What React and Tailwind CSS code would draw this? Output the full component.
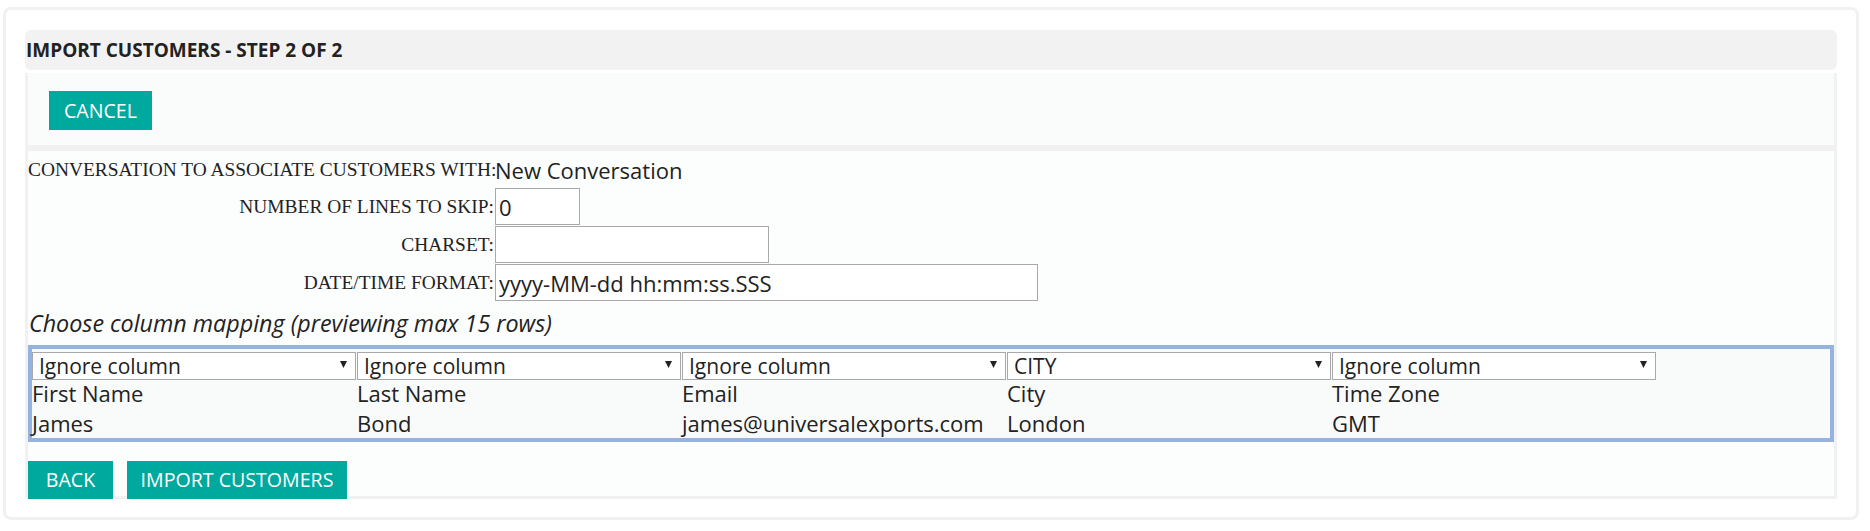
const COLUMNS = [
  { mapping: 'Ignore column', header: 'First Name', value: 'James' },
  { mapping: 'Ignore column', header: 'Last Name', value: 'Bond' },
  { mapping: 'Ignore column', header: 'Email', value: 'james@universalexports.com' },
  { mapping: 'CITY', header: 'City', value: 'London' },
  { mapping: 'Ignore column', header: 'Time Zone', value: 'GMT' },
]

function MappingSelect({ value }) {
  return (
    <div className="relative w-[324px] h-[28px]">
      <select
        defaultValue={value}
        className="appearance-none w-full h-full bg-white border border-[#a9a9a9] pl-[6px] pr-[20px] text-[21px] leading-[26px] text-[#222] outline-none"
      >
        <option>{value}</option>
      </select>
      <svg
        className="absolute right-[9px] top-[11px] pointer-events-none"
        width="7"
        height="7"
        viewBox="0 0 7 7"
      >
        <path d="M0 0h7L3.5 7z" fill="#222" />
      </svg>
    </div>
  )
}

function FieldRow({ label, children, className = '' }) {
  return (
    <div className={`flex items-center h-[37px] ${className}`}>
      <div className="w-[466px] text-right font-['Liberation_Serif',serif] text-[19.4px] text-[#222] leading-none whitespace-nowrap">
        {label}
      </div>
      <div className="ml-[1px] flex items-center">{children}</div>
    </div>
  )
}

function TealButton({ children, className = '' }) {
  return (
    <button className={`h-[38px] bg-[#00a99d] text-white text-[19.6px] leading-none uppercase ${className}`}>
      {children}
    </button>
  )
}

export default function App() {
  return (
    <div className="min-h-[531px] bg-white pl-[3px] pt-[7px] font-['Open_Sans',sans-serif] text-[#222]">
      <div className="w-[1856px] border-[3px] border-[#f1f1f1] rounded-[8px] px-[19px] pt-[20px] pb-[18px] bg-white">
        {/* Header */}
        <div className="h-[40px] bg-[#f2f2f2] rounded-[6px] flex items-center pl-[1px] text-[19px] font-bold text-[#222]">
          IMPORT CUSTOMERS - STEP 2 OF 2
        </div>

        <div className="mt-[3px] border-x-[3px] border-b-[3px] border-[#f1f1f1] bg-[#fcfdfd]">
          {/* Cancel bar */}
          <div className="h-[72px] bg-[#fafcfb] pl-[21px] pt-[18px]">
            <TealButton className="w-[103px] h-[39px]">Cancel</TealButton>
          </div>
          <div className="h-[6px] bg-[#f1f1f1]" />

          {/* Form */}
          <div className="h-[345px] flex flex-col">
            <FieldRow label="CONVERSATION TO ASSOCIATE CUSTOMERS WITH:">
              <span className="text-[22px] leading-[30px]">New Conversation</span>
            </FieldRow>
            <FieldRow label="NUMBER OF LINES TO SKIP:">
              <input
                defaultValue="0"
                className="w-[85px] h-[37px] bg-white border border-[#a9a9a9] pl-[3px] text-[22px] text-[#222] outline-none"
              />
            </FieldRow>
            <FieldRow label="CHARSET:" className="mt-[1px]">
              <input className="w-[274px] h-[37px] bg-white border border-[#a9a9a9] pl-[3px] text-[22px] outline-none" />
            </FieldRow>
            <FieldRow label="DATE/TIME FORMAT:" className="mt-[1px]">
              <input
                defaultValue="yyyy-MM-dd hh:mm:ss.SSS"
                className="w-[543px] h-[37px] bg-white border border-[#a9a9a9] pl-[3px] text-[22px] text-[#222] outline-none"
              />
            </FieldRow>

            <div className="h-[44px] flex items-center pl-[1px] italic text-[23.3px] leading-[30px] whitespace-nowrap">
              Choose column mapping (previewing max 15 rows)
            </div>

            {/* Preview table */}
            <div className="h-[97px] border-[4px] border-[#95b3de] bg-[#f9fbfb] pt-[1px]">
              <div className="grid grid-cols-[repeat(5,325px)] text-[22px] leading-[30px]">
                {COLUMNS.map((c, i) => (
                  <MappingSelect key={'s' + i} value={c.mapping} />
                ))}
                {COLUMNS.map((c, i) => (
                  <div key={'h' + i} className="whitespace-nowrap">{c.header}</div>
                ))}
                {COLUMNS.map((c, i) => (
                  <div key={'v' + i} className="whitespace-nowrap">{c.value}</div>
                ))}
              </div>
            </div>

            <div className="mt-[19px] flex gap-[14px] h-[34px]">
              <TealButton className="w-[85px] relative">Back</TealButton>
              <TealButton className="w-[220px] relative">Import Customers</TealButton>
            </div>
          </div>
        </div>
      </div>
    </div>
  )
}
